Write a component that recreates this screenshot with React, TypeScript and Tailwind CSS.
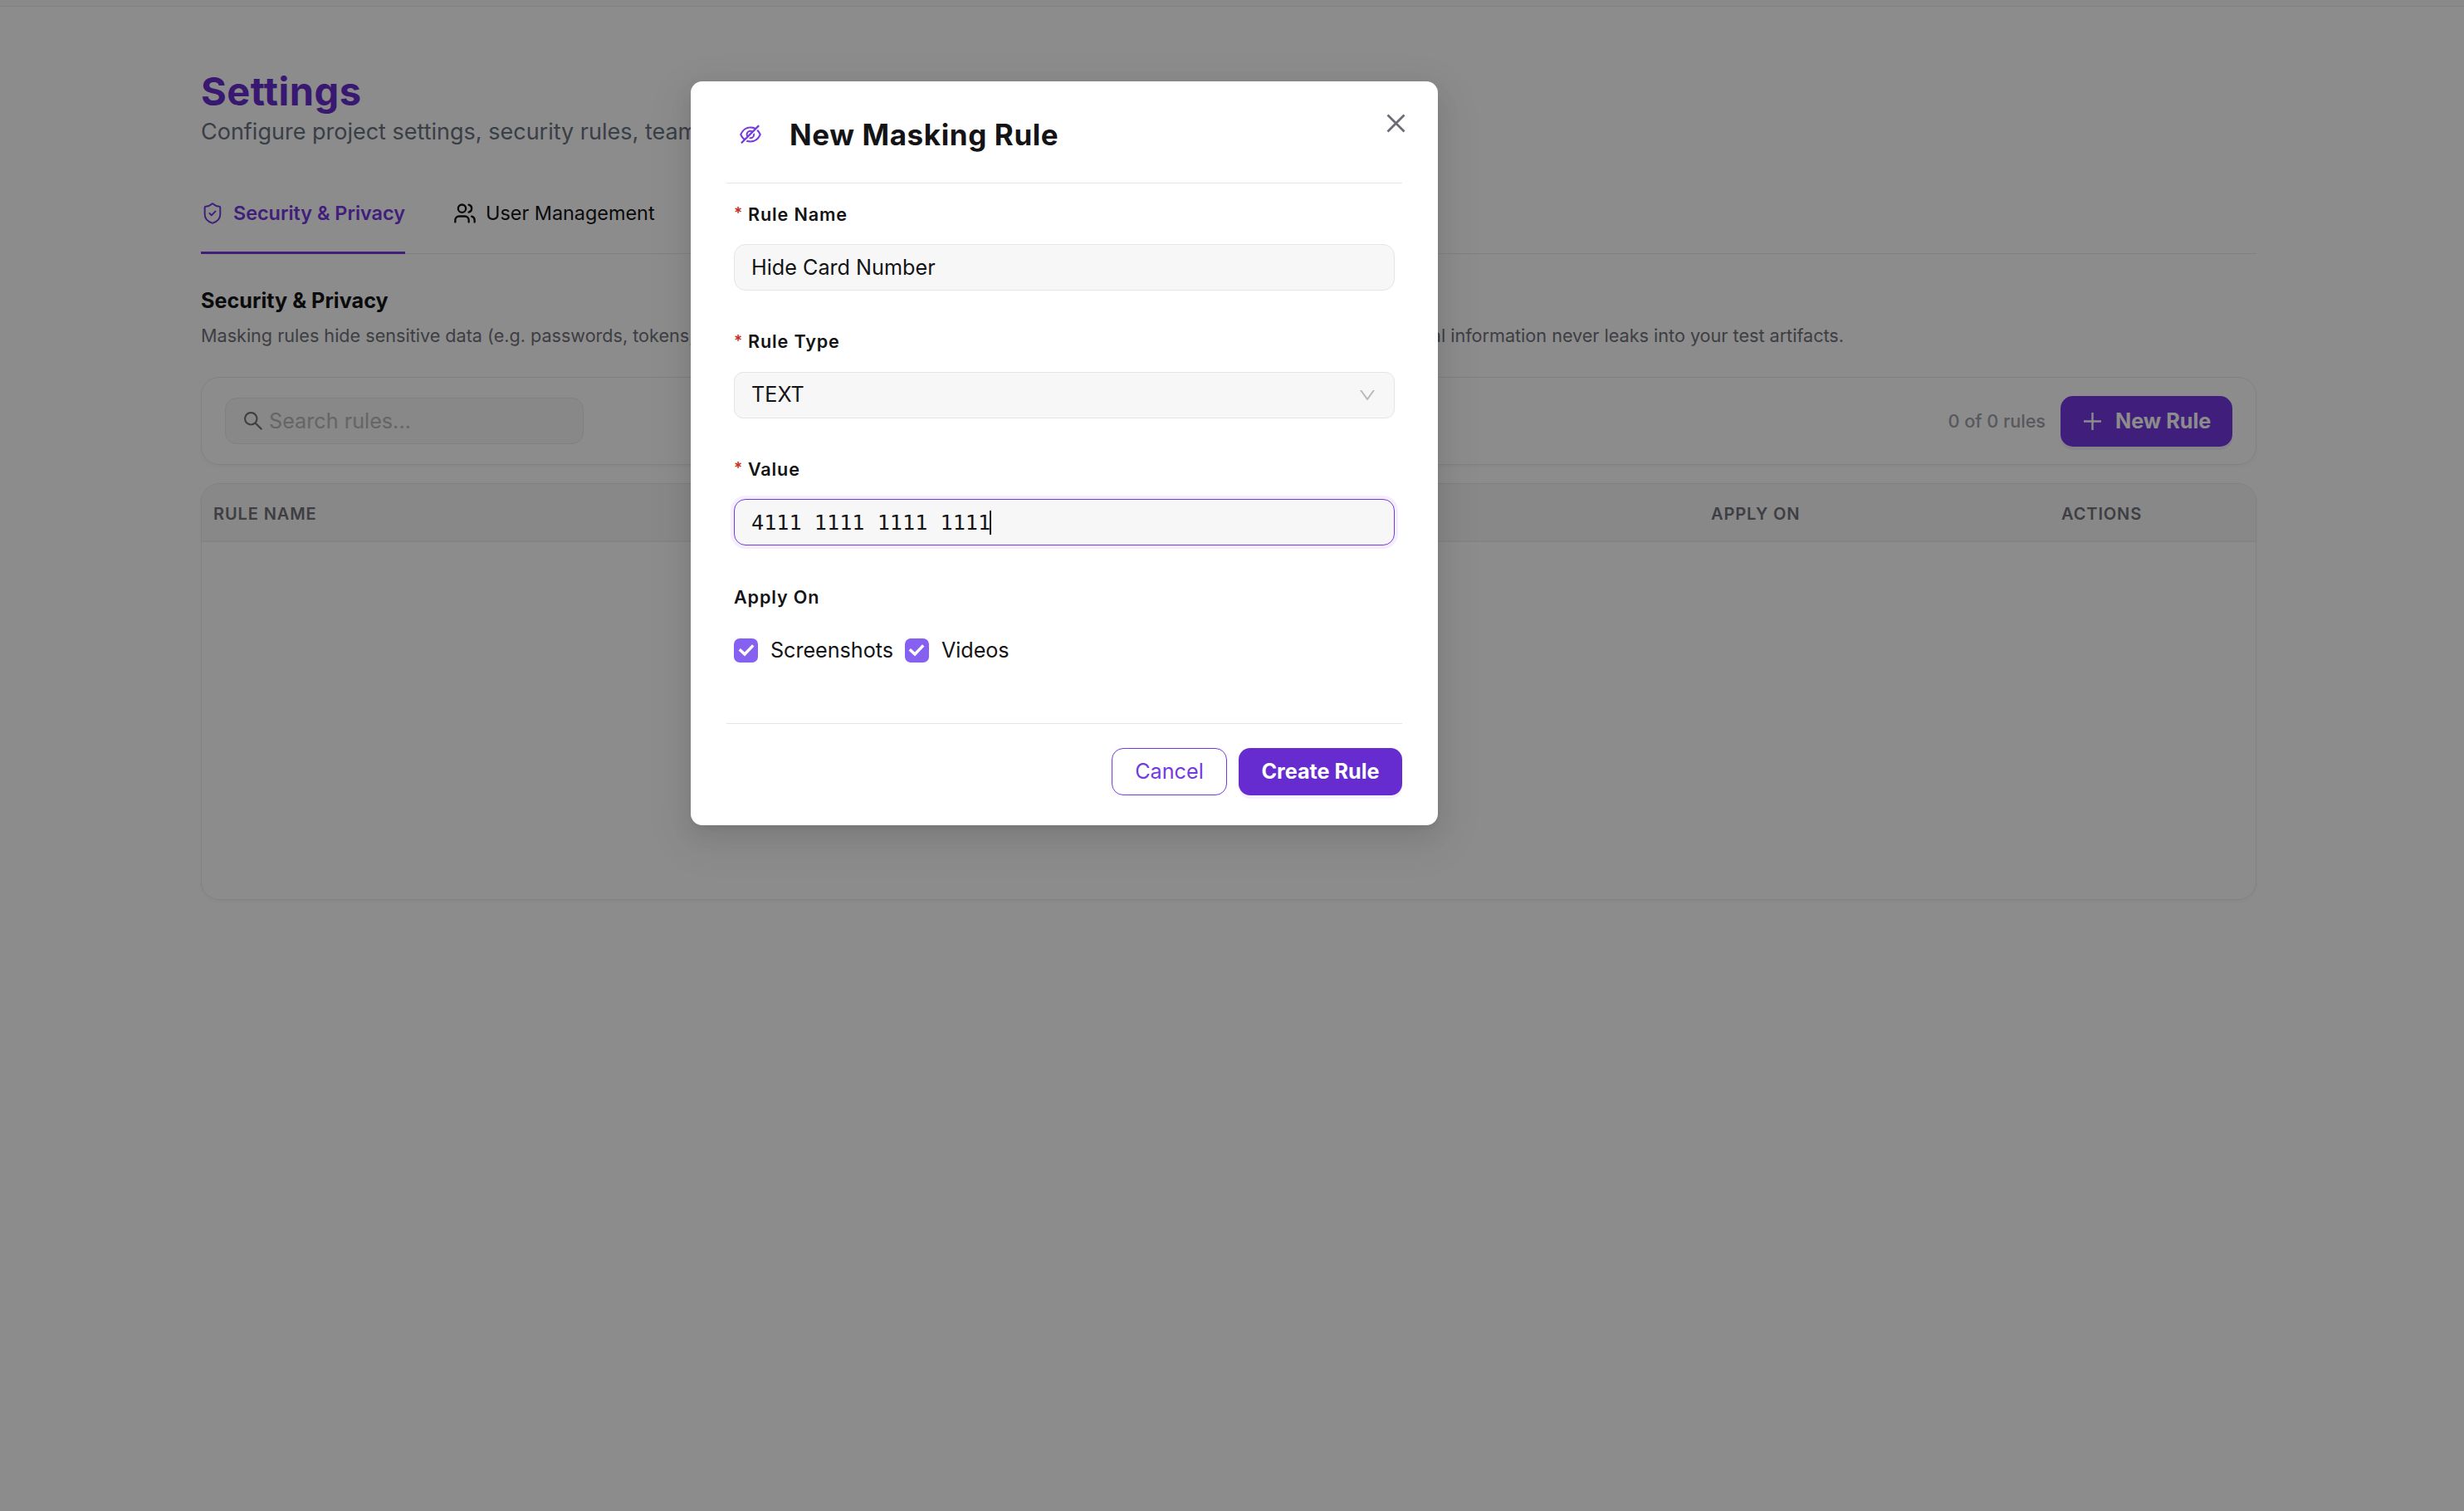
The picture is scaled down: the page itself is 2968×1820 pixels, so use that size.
import type { ReactNode } from "react";
import { ShieldCheck, Users } from "lucide-react";
import { AiOutlineDown, AiOutlineEyeInvisible, AiOutlineSearch } from "react-icons/ai";

const COLUMNS = [
  { label: "Rule Name", className: "w-[1804px]" },
  { label: "Apply On", className: "w-[422px]" },
  { label: "Actions", className: "flex-1" },
];

function Field({ label, required, children }: { label: string; required?: boolean; children: ReactNode }) {
  return (
    <div className="h-[153.6px]">
      <div className="mb-[20.3px] flex h-8 items-center text-[21.6px] font-semibold tracking-[0.85px]">
        {required && <span className="mr-[6px] w-[11px] pb-px text-[19px] text-[#c52c22]">*</span>}
        {label}
      </div>
      {children}
    </div>
  );
}

function Checkbox({ label }: { label: string }) {
  return (
    <label className="flex items-center">
      <span className="flex h-[29px] w-[29px] items-center justify-center rounded-[7px] bg-[#8660f0]">
        <svg width="20" height="16" viewBox="0 0 20 16" fill="none" stroke="white" strokeWidth="3.4">
          <path d="M1.8 7.2 8 13 18.2 2.4" />
        </svg>
      </span>
      <span className="ml-[15px] pt-0.5 text-[25.2px] tracking-[-0.05px]">{label}</span>
    </label>
  );
}

function SettingsPage() {
  return (
    <div className="h-full bg-white">
      <div className="h-2 border-b border-[#ebebeb] bg-[#fafafa]" />
      <main className="ml-[242px] flex w-[2476px] flex-col">
        <h1 className="mt-[73px] h-[56px] text-[47px] leading-[58px] font-bold tracking-[0.5px] text-[#662ccd]">
          Settings
        </h1>
        <p className="h-10 pt-0.5 text-[27px] leading-10 text-[#6b7280]">
          Configure project settings, security rules, team members and access
        </p>

        <nav className="mt-[28px] flex h-[101px] gap-[58px] border-b border-[#ebebeb]">
          <div className="-mb-px flex w-[246px] items-center border-b-[3px] border-[#743ae0] pt-1.5 text-[23.4px] font-semibold whitespace-nowrap text-[#743ae0]">
            <ShieldCheck size={28} strokeWidth={1.7} className="mr-[11px]" />
            Security &amp; Privacy
          </div>
          <div className="flex items-center pt-1 text-[23.4px] text-[#141416]">
            <Users size={28} strokeWidth={2} className="mr-[11px]" />
            User Management
          </div>
        </nav>

        <h2 className="mt-[39px] h-8 text-[25.2px] leading-[34px] font-bold text-[#141416]">Security &amp; Privacy</h2>
        <p className="mt-[10px] flex h-8 w-[1979px] justify-between text-[21.6px] leading-[34px] whitespace-nowrap text-[#71717a]">
          <span>Masking rules hide sensitive data (e.g. passwords, tokens, card numbers) in screenshots</span>
          <span>so confidential information never leaks into your test artifacts.</span>
        </p>

        <section className="mt-[35px] flex h-[106px] items-center rounded-[22px] border border-[#ebebeb] px-7 shadow-[0_2px_5px_rgba(0,0,0,0.04)]">
          <div className="flex h-[56px] w-[432px] items-center rounded-[14px] border border-[#ebebeb] bg-[#f7f7f7] pl-5">
            <AiOutlineSearch size={28} className="mr-[5px] -ml-px text-[#71717a]" />
            <span className="pt-px text-[25.2px] text-[#b9b9b9]">Search rules...</span>
          </div>
          <span className="ml-auto text-[21.6px] font-medium text-[#a1a1aa]">0 of 0 rules</span>
          <button className="ml-[18px] flex h-[61px] w-[207px] items-center rounded-[15px] bg-[#743ae0] pl-7 text-[25.2px] font-bold text-white shadow-[0_4px_0_rgba(116,58,224,0.08)]">
            <svg width="21" height="21" viewBox="0 0 21 21" stroke="currentColor" strokeWidth="2.4" className="mr-[17px]">
              <path d="M10.5 0v21M0 10.5h21" />
            </svg>
            <span className="pt-px">New Rule</span>
          </button>
        </section>

        <section className="mt-[22px] h-[502px] overflow-hidden rounded-[22px] border border-[#ebebeb] shadow-[0_2px_5px_rgba(0,0,0,0.04)]">
          <div className="flex h-[70px] items-center border-b-2 border-[#f0f0f0] bg-[#f7f7f7] pt-1 pl-[14px] text-[20px] font-semibold tracking-[0.9px] text-[#71717a] uppercase">
            {COLUMNS.map((column) => (
              <div key={column.label} className={column.className}>
                {column.label}
              </div>
            ))}
          </div>
        </section>
      </main>
    </div>
  );
}

function MaskingRuleModal() {
  return (
    <div
      role="dialog"
      className="absolute top-[98px] left-[832px] h-[896px] w-[900px] rounded-[14px] bg-white px-[43px] text-[#141416] shadow-[0_11px_29px_rgba(0,0,0,0.08),0_5px_11px_-7px_rgba(0,0,0,0.12),0_16px_50px_14px_rgba(0,0,0,0.05)]"
    >
      <button aria-label="Close" className="absolute top-[39px] right-[39px]">
        <svg width="23" height="23" viewBox="0 0 23 23" stroke="#6b6b76" strokeWidth="2.8">
          <path d="M1.5 1.5l20 20M21.5 1.5l-20 20" />
        </svg>
      </button>

      <header className="flex h-[123px] items-center border-b border-[#e5e5e8] pt-1.5 pl-[14px]">
        <AiOutlineEyeInvisible size={30} className="mr-[32px] text-[#743ae0]" />
        <h3 className="pb-px text-[35px] leading-[56px] font-bold tracking-[0.6px]">New Masking Rule</h3>
      </header>

      <form className="h-[650px] px-[9px] pt-[21px]">
        <Field label="Rule Name" required>
          <div className="flex h-[56px] items-center rounded-[14px] border border-[#e5e5e8] bg-[#f7f7f7] pt-0.5 pl-5 text-[25.2px]">
            Hide Card Number
          </div>
        </Field>
        <Field label="Rule Type" required>
          <div className="flex h-[56px] items-center justify-between rounded-[11px] border border-[#e5e5e8] bg-[#f7f7f7] pt-px pr-5 pl-5 text-[25.2px]">
            TEXT
            <AiOutlineDown size={24} className="text-[#b8b8b8]" />
          </div>
        </Field>
        <Field label="Value" required>
          <div className="flex h-[56px] items-center rounded-[14px] border border-[#743ae0] bg-[#f7f7f7] pl-5 font-['DejaVu_Sans_Mono',monospace] text-[25.2px] shadow-[0_0_0_4px_#f5eeff]">
            4111 1111 1111 1111
            <span className="-ml-px h-[29px] w-0.5 bg-[#141416]" />
          </div>
        </Field>
        <Field label="Apply On">
          <div className="flex h-[56px] items-center gap-[14px]">
            <Checkbox label="Screenshots" />
            <Checkbox label="Videos" />
          </div>
        </Field>
      </form>

      <footer className="flex justify-end gap-[14px] border-t border-[#e5e5e8] pt-[29px] text-[25.2px]">
        <button className="h-[57px] w-[139px] rounded-[14px] border border-[#743ae0] pt-px text-[#743ae0]">Cancel</button>
        <button className="h-[57px] w-[197px] rounded-[14px] bg-[#662ccf] pt-px font-bold text-white shadow-[0_4px_0_#f8f0ff]">
          Create Rule
        </button>
      </footer>
    </div>
  );
}

export default function App() {
  return (
    <div className="relative h-[1820px] w-[2968px] overflow-hidden font-['Inter',sans-serif]">
      <SettingsPage />
      <div className="absolute inset-0 bg-black/45">
        <MaskingRuleModal />
      </div>
    </div>
  );
}
